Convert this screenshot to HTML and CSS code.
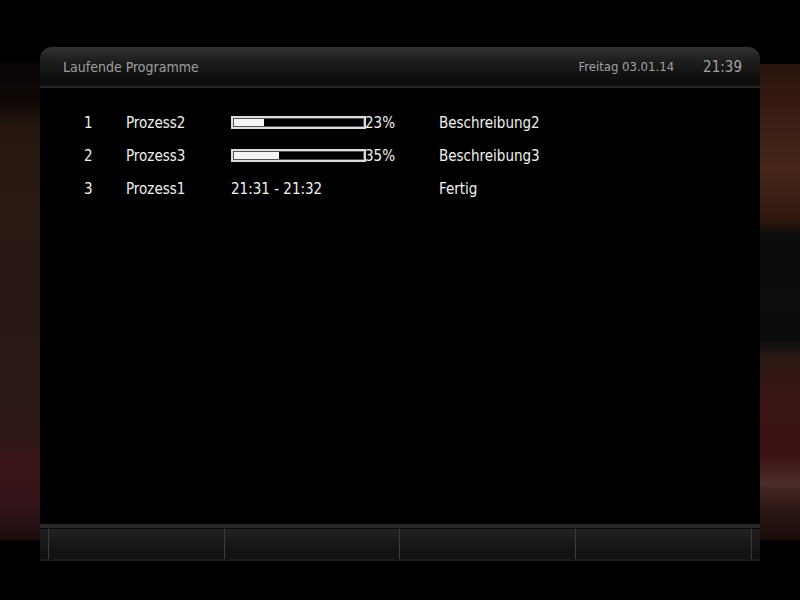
FILE: index.html
```html
<!DOCTYPE html>
<html lang="de">
<head>
  <meta charset="UTF-8">
  <title>Laufende Programme</title>
  <link rel="stylesheet" href="styles.css">
</head>
<body>
  <div class="screen">
    <div class="window">
      <div class="window-header">
        <span class="window-title">Laufende Programme</span>
        <div class="clock">
          <span class="date">Freitag 03.01.14</span>
          <span class="time">21:39</span>
        </div>
      </div>

      <div class="window-body">
        <div class="task-list">
          <div class="task">
            <span class="task-num">1</span>
            <span class="task-name">Prozess2</span>
            <div class="progress"><div class="progress-fill" style="width: 23%;"></div></div>
            <span class="task-percent">23%</span>
            <span class="task-desc">Beschreibung2</span>
          </div>
          <div class="task">
            <span class="task-num">2</span>
            <span class="task-name">Prozess3</span>
            <div class="progress"><div class="progress-fill" style="width: 35%;"></div></div>
            <span class="task-percent">35%</span>
            <span class="task-desc">Beschreibung3</span>
          </div>
          <div class="task">
            <span class="task-num">3</span>
            <span class="task-name">Prozess1</span>
            <span class="task-time">21:31 - 21:32</span>
            <span class="task-desc">Fertig</span>
          </div>
        </div>
      </div>

      <div class="button-bar">
        <div class="bar-cap"></div>
        <div class="bar-button"></div>
        <div class="bar-button"></div>
        <div class="bar-button"></div>
        <div class="bar-button"></div>
        <div class="bar-cap right"></div>
      </div>
    </div>
  </div>
</body>
</html>
```
FILE: styles.css
```css
body {
  margin: 0;
  padding: 0;
  background-color: #000;
  font-family: "DejaVu Sans", sans-serif;
  font-stretch: condensed;
  overflow: hidden;
}

/* dimmed tv picture behind the osd */
.screen {
  width: 800px;
  height: 600px;
  padding-top: 47px;
  box-sizing: border-box;
  background-color: #000;
  background-image:
    linear-gradient(to bottom, #080404 0%, #0f0807 8%, #25170f 14%, #2b1a14 30%, #281914 45%, #2a1916 62%, #2e1816 78%, #3a1517 84%, #34141a 92%, #1c0c0c 100%),
    linear-gradient(to bottom, #2a140e 0%, #3c1d14 12%, #452619 22%, #33190f 32%, #0d0c0c 36%, #0b0d0d 58%, #2c1a15 62%, #3a1514 70%, #3c1213 82%, #4a2c28 88%, #2a1513 94%, #1a0b0b 100%);
  background-size: 40px 478px, 40px 476px;
  background-position: 0 62px, 760px 64px;
  background-repeat: no-repeat;
}

.window {
  width: 720px;
  margin-left: 40px;
  background-color: #000;
  border-radius: 12px 12px 0 0;
}

.window-header {
  height: 39px;
  display: flex;
  justify-content: space-between;
  align-items: center;
  padding: 0 18px 0 23px;
  border-radius: 12px 12px 0 0;
  background: linear-gradient(to bottom, #343434 0%, #1e1e1e 35%, #111 70%, #0b0b0b 100%);
  border-bottom: 2px solid #262626;
}

.window-title {
  color: #9e9e9e;
  font-size: 14px;
}

.clock {
  display: flex;
  align-items: center;
  gap: 29px;
  color: #a2a2a2;
}

.date {
  font-size: 13px;
}

.time {
  font-size: 15px;
}

.window-body {
  height: 436px;
  padding-top: 18px;
  box-sizing: border-box;
}

.task {
  display: grid;
  grid-template-columns: 42px 105px 135px 73px 1fr;
  align-items: center;
  height: 33px;
  padding-left: 44px;
  color: #f2f2f2;
  font-size: 15px;
}

.task-time {
  grid-column: span 2;
}

.progress {
  height: 13px;
  border: 2px solid #dcdcdc;
  padding: 1px;
  box-sizing: border-box;
  box-shadow: inset 0 0 0 1px #555;
}

.progress-fill {
  height: 100%;
  background-color: #f4f4f4;
}

.task-percent {
  margin-left: -1px;
}

/* colour key bar at the bottom */
.button-bar {
  display: flex;
  height: 37px;
  border-top: 4px solid #292929;
  border-bottom: 2px solid #1b1b1b;
  box-sizing: border-box;
  background-color: #121212;
}

.bar-cap {
  width: 8px;
  background: linear-gradient(to bottom, #1f1f1f, #0f0f0f);
  border-top: 1px solid #080808;
}

.bar-cap.right {
  width: 8px;
  border-left: 1px solid #3a3a3a;
}

.bar-button {
  width: 175px;
  border-left: 1px solid #3c3c3c;
  border-top: 1px solid #080808;
  background: linear-gradient(to bottom, #222 0%, #1a1a1a 40%, #101010 100%);
}
```
